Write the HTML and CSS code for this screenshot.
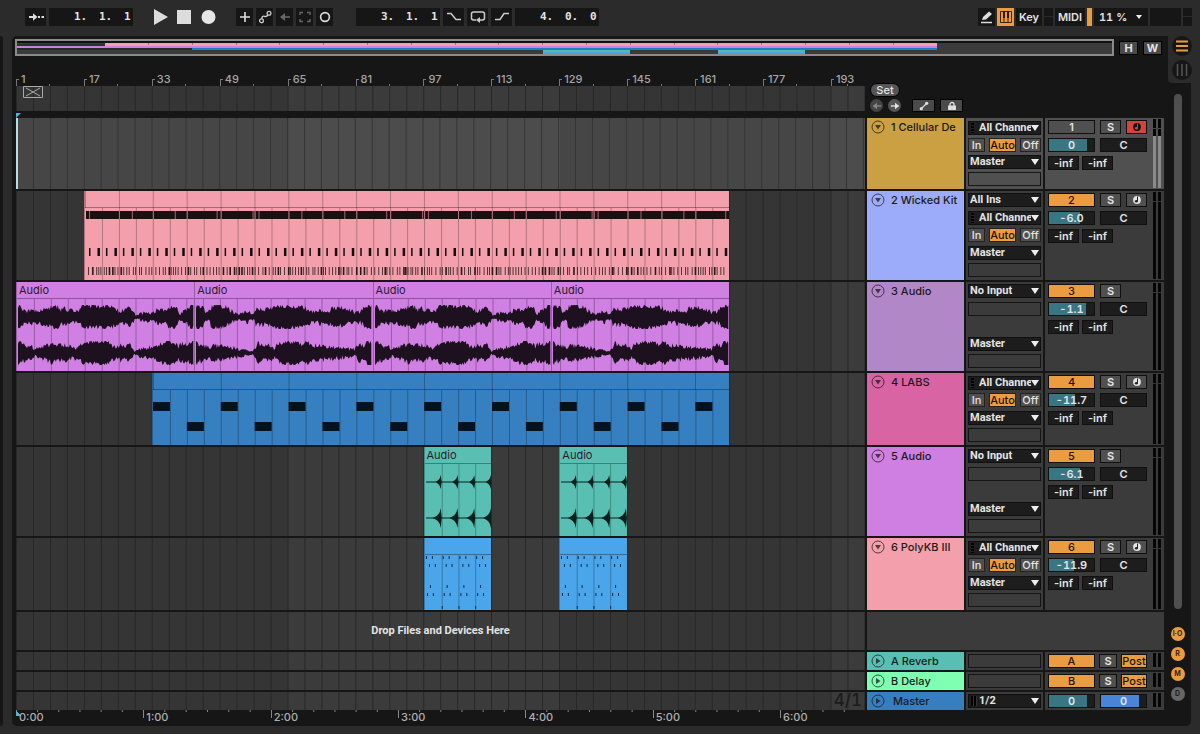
FILE: index.html
```html
<!DOCTYPE html>
<html lang="en">
<head>
<meta charset="utf-8">
<title>Arrangement</title>
<link rel="stylesheet" href="styles.css">
</head>
<body>
<svg class="sprite" aria-hidden="true">
  <symbol id="fold" viewBox="0 0 14 14"><circle cx="7" cy="7" r="6" fill="none" stroke="currentColor"/><path d="M4 5h6L7 9.500z" fill="currentColor"/></symbol>
  <symbol id="unfold" viewBox="0 0 14 14"><circle cx="7" cy="7" r="6" fill="none" stroke="currentColor"/><path d="M5 4v6l4.500-3z" fill="currentColor"/></symbol>
  <symbol id="arm" viewBox="0 0 10 10"><circle cx="5" cy="5" r="3.900" fill="currentColor"/><path d="M5.500 1.600v4.600" stroke="var(--note)" stroke-width="1" fill="none"/><ellipse cx="4.400" cy="6.300" rx="1.500" ry="1.200" fill="var(--note)"/></symbol>
  <symbol id="left" viewBox="0 0 12 12"><path d="M2 6h9" stroke="currentColor" stroke-width="1.600"/><path d="M1 6l5-4v8z" fill="currentColor"/></symbol>
  <symbol id="right" viewBox="0 0 12 12"><path d="M1 6h9" stroke="currentColor" stroke-width="1.600"/><path d="M11 6L6 2v8z" fill="currentColor"/></symbol>
</svg>

<header class="toolbar">
  <div class="group">
    <button class="tool wide" aria-label="Follow"><svg width="18" height="12" viewBox="0 0 18 12"><path d="M2 6h6M11 6h2M14.500 6h2.500" stroke="#ddd" stroke-width="1.800"/><path d="M10.500 6L6 2.200v7.600z" fill="#ddd"/></svg></button>
    <div class="position"><span>1.</span><span>1.</span><span>1</span></div>
  </div>
  <div class="transport">
    <button aria-label="Play"><svg width="15" height="16"><path d="M1 0l14 8-14 8z" fill="#dcdcdc"/></svg></button>
    <button aria-label="Stop"><svg width="15" height="16"><path d="M0 1h14v14H0z" fill="#dcdcdc"/></svg></button>
    <button aria-label="Record"><svg width="15" height="16"><circle cx="7.500" cy="8" r="7" fill="#e6e6e6"/></svg></button>
  </div>
  <div class="group edit">
    <button class="tool" aria-label="Overdub"><svg width="12" height="12"><path d="M6 1v10M1 6h10" stroke="#ddd" stroke-width="1.600"/></svg></button>
    <button class="tool" aria-label="Automation arm"><svg width="14" height="14" fill="none" stroke="#ccc" stroke-width="1.300"><circle cx="3.500" cy="10.800" r="1.900"/><circle cx="11" cy="3.200" r="1.900"/><path d="M3.800 8.900Q4 5.500 6.500 6.300T9.800 4.700"/></svg></button>
    <button class="tool dim" aria-label="Re-enable automation"><svg width="12" height="12"><use href="#left"/></svg></button>
    <button class="tool dim" aria-label="Capture"><svg width="12" height="12" fill="none" stroke="currentColor" stroke-width="1.400"><path d="M1 4V1.500h3M8 1.500h3V4M11 8v2.500H8M4 10.500H1V8"/></svg></button>
    <button class="tool" aria-label="Session record"><svg width="12" height="12"><circle cx="6" cy="6" r="4.400" fill="none" stroke="#ddd" stroke-width="1.600"/></svg></button>
  </div>
  <div class="group loop">
    <div class="position"><span>3.</span><span>1.</span><span>1</span></div>
    <button class="tool wide" aria-label="Punch in"><svg width="16" height="10" fill="none" stroke="#ccc" stroke-width="1.500"><path d="M1 1.500h4l5 6h5"/></svg></button>
    <button class="tool wide" aria-label="Loop"><svg width="16" height="14" fill="none" stroke="#ccc" stroke-width="1.500"><path d="M6 10H3.500Q1.500 10 1.500 8V4q0-2 2-2h9q2 0 2 2v4q0 2-2 2H10"/><path d="M6 10l4-3v6z" fill="#ccc" stroke="none"/></svg></button>
    <button class="tool wide" aria-label="Punch out"><svg width="16" height="10" fill="none" stroke="#ccc" stroke-width="1.500"><path d="M1 7.500h5l4-6h5"/></svg></button>
    <div class="position"><span>4.</span><span>0.</span><span>0</span></div>
  </div>
  <div class="group status">
    <button class="tool" aria-label="Draw mode"><svg width="13" height="13"><path d="M2 9l1-3 6-5.500L12 3 6 8.500z" fill="#ddd"/><path d="M1 11.500h11" stroke="#ddd" stroke-width="1.500"/></svg></button>
    <button class="tool keys" aria-label="Computer MIDI keyboard"><svg width="12" height="12"><path d="M.5.5h11v11H.5zM4 6v5.500M8 6v5.500" fill="none" stroke="#3b2508"/><path d="M3 0h2v7H3zM7 0h2v7H7z" fill="#2a1a05"/></svg></button>
    <button class="tool text">Key</button>
    <span class="lamps"></span>
    <button class="tool text midi-map">MIDI</button>
    <span class="load"></span>
    <label class="pick cpu"><select aria-label="CPU load"><option>11 %</option></select></label>
    <span class="blank"></span>
    <span class="lamps"></span>
  </div>
</header>

<div class="work">
  <div class="browser-edge"></div>
  <main class="panel">
    <div class="arrange">
      <div class="overview-row">
        <div class="overview">
          <svg viewBox="0 0 100 11" preserveAspectRatio="none" shape-rendering="crispEdges">
            <rect width="84" height="6" y="1" fill="#1c3a24"/>
            <rect x="8" y="0" width="76" height="3" fill="#f4a0ac"/>
            <rect x="0" y="3" width="84" height="2" fill="#cf7fe2"/>
            <rect x="0" y="5" width="84" height="1" fill="#282828"/>
            <rect x="16" y="5" width="68" height="2" fill="#1d80c4"/>
            <rect x="48" y="7" width="8" height="2" fill="#4fbcb0"/><rect x="48" y="9" width="8" height="2" fill="#4aa5ea"/>
            <rect x="64" y="7" width="8" height="2" fill="#4fbcb0"/><rect x="64" y="9" width="8" height="2" fill="#4aa5ea"/>
            <path d="M12 0v2M16 0v2M20 0v2M24 0v2M28 0v2M32 0v2M36 0v2M40 0v2M44 0v2M48 0v2M52 0v2M56 0v2M60 0v2M64 0v2M68 0v2M72 0v2M76 0v2M80 0v2" stroke="#a5707a" stroke-width="1" vector-effect="non-scaling-stroke"/>
          </svg>
        </div>
        <button class="key">H</button>
        <button class="key">W</button>
      </div>

      <div class="head">
        <div class="rulers">
          <ol class="bars"><li>1</li><li>17</li><li>33</li><li>49</li><li>65</li><li>81</li><li>97</li><li>113</li><li>129</li><li>145</li><li>161</li><li>177</li><li>193</li></ol>
          <div class="scrub lines"><svg width="20" height="12" viewBox="0 0 20 12"><path d="M.5.5h19v11H.5zM3 2l14 8M17 2L3 10" fill="none" stroke="#aaa"/></svg></div>
          <svg class="flag" width="5" height="5"><path d="M0 0h5L0 5z" fill="#4db5d8"/></svg>
        </div>
        <div class="locators">
          <button class="set">Set</button>
          <div class="nav">
            <button class="round dim" aria-label="Previous locator"><svg width="10" height="10"><use href="#left"/></svg></button>
            <button class="round" aria-label="Next locator"><svg width="10" height="10"><use href="#right"/></svg></button>
            <button class="small" aria-label="Automation mode"><svg width="10" height="10"><path d="M2 8l6-6" stroke="#ddd" stroke-width="1.300"/><circle cx="2.300" cy="7.700" r="1.600" fill="#ddd"/><circle cx="7.700" cy="2.300" r="1.600" fill="#ddd"/></svg></button>
            <button class="small" aria-label="Lock envelopes"><svg width="10" height="10"><path d="M1 4.500h8V9H1z" fill="#ddd"/><path d="M3 5V3.500a2 2 0 0 1 4 0V5" fill="none" stroke="#ddd" stroke-width="1.300"/></svg></button>
          </div>
        </div>
      </div>

      <section class="track first selected">
        <div class="lane lines"></div>
        <div class="name gold"><button aria-label="Fold"><svg><use href="#fold"/></svg></button>1 Cellular De</div>
        <div class="io midi">
          <label class="pick chan"><select aria-label="Channel"><option>All Channels</option></select></label>
          <div class="monitor"><button>In</button><button class="on">Auto</button><button>Off</button></div>
          <label class="pick"><select aria-label="Output"><option>Master</option></select></label>
          <span class="slot"></span>
        </div>
        <div class="mix">
          <div class="controls">
            <div class="line"><button class="num">1</button><button class="sq">S</button><button class="sq rec" aria-label="Arm"><svg><use href="#arm"/></svg></button></div>
            <div class="line"><input class="vol" aria-label="Volume" value="0" style="--fill:84%"><input class="pan" aria-label="Pan" value="C"></div>
            <div class="line sends"><input aria-label="Send A" value="-inf"><input aria-label="Send B" value="-inf"></div>
          </div>
          <div class="meter"></div>
        </div>
      </section>

      <section class="track tall">
        <div class="lane lines">
          <div class="clip kit"><div class="title"></div><svg data-art="kit" viewBox="0 0 646 72" preserveAspectRatio="none"></svg></div>
        </div>
        <div class="name periwinkle"><button aria-label="Fold"><svg><use href="#fold"/></svg></button>2 Wicked Kit</div>
        <div class="io">
          <label class="pick"><select aria-label="Input"><option>All Ins</option></select></label>
          <label class="pick chan"><select aria-label="Channel"><option>All Channels</option></select></label>
          <div class="monitor"><button>In</button><button class="on">Auto</button><button>Off</button></div>
          <label class="pick"><select aria-label="Output"><option>Master</option></select></label>
          <span class="slot"></span>
        </div>
        <div class="mix">
          <div class="controls">
            <div class="line"><button class="num on">2</button><button class="sq">S</button><button class="sq" aria-label="Arm"><svg><use href="#arm"/></svg></button></div>
            <div class="line"><input class="vol" aria-label="Volume" value="-6.0" style="--fill:70%"><input class="pan" aria-label="Pan" value="C"></div>
            <div class="line sends"><input aria-label="Send A" value="-inf"><input aria-label="Send B" value="-inf"></div>
          </div>
          <div class="meter"></div>
        </div>
      </section>

      <section class="track tall">
        <div class="lane lines">
          <div class="clip orchid o1"><div class="title">Audio</div><svg data-art="waveA" viewBox="0 0 178 72" preserveAspectRatio="none"></svg></div>
          <div class="clip orchid o2"><div class="title">Audio</div><svg data-art="waveB" viewBox="0 0 178 72" preserveAspectRatio="none"></svg></div>
          <div class="clip orchid o3"><div class="title">Audio</div><svg data-art="waveA" viewBox="0 0 178 72" preserveAspectRatio="none"></svg></div>
          <div class="clip orchid o4"><div class="title">Audio</div><svg data-art="waveB" viewBox="0 0 178 72" preserveAspectRatio="none"></svg></div>
        </div>
        <div class="name lilac"><button aria-label="Fold"><svg><use href="#fold"/></svg></button>3 Audio</div>
        <div class="io">
          <label class="pick"><select aria-label="Input"><option>No Input</option></select></label>
          <span class="slot"></span>
          <span class="spacer"></span>
          <label class="pick"><select aria-label="Output"><option>Master</option></select></label>
          <span class="slot"></span>
        </div>
        <div class="mix">
          <div class="controls">
            <div class="line"><button class="num on">3</button><button class="sq">S</button></div>
            <div class="line"><input class="vol" aria-label="Volume" value="-1.1" style="--fill:82%"><input class="pan" aria-label="Pan" value="C"></div>
            <div class="line sends"><input aria-label="Send A" value="-inf"><input aria-label="Send B" value="-inf"></div>
          </div>
          <div class="meter"></div>
        </div>
      </section>

      <section class="track">
        <div class="lane lines">
          <div class="clip labs"><div class="title"></div><svg data-art="labs" viewBox="0 0 578 55" preserveAspectRatio="none"></svg></div>
        </div>
        <div class="name pink"><button aria-label="Fold"><svg><use href="#fold"/></svg></button>4 LABS</div>
        <div class="io midi">
          <label class="pick chan"><select aria-label="Channel"><option>All Channels</option></select></label>
          <div class="monitor"><button>In</button><button class="on">Auto</button><button>Off</button></div>
          <label class="pick"><select aria-label="Output"><option>Master</option></select></label>
          <span class="slot"></span>
        </div>
        <div class="mix">
          <div class="controls">
            <div class="line"><button class="num on">4</button><button class="sq">S</button><button class="sq" aria-label="Arm"><svg><use href="#arm"/></svg></button></div>
            <div class="line"><input class="vol" aria-label="Volume" value="-11.7" style="--fill:57%"><input class="pan" aria-label="Pan" value="C"></div>
            <div class="line sends"><input aria-label="Send A" value="-inf"><input aria-label="Send B" value="-inf"></div>
          </div>
          <div class="meter"></div>
        </div>
      </section>

      <section class="track tall">
        <div class="lane lines">
          <div class="clip teal p1"><div class="title">Audio</div><svg data-art="hits" viewBox="0 0 68 72" preserveAspectRatio="none"></svg></div>
          <div class="clip teal p2"><div class="title">Audio</div><svg data-art="hits" viewBox="0 0 68 72" preserveAspectRatio="none"></svg></div>
        </div>
        <div class="name violet"><button aria-label="Fold"><svg><use href="#fold"/></svg></button>5 Audio</div>
        <div class="io">
          <label class="pick"><select aria-label="Input"><option>No Input</option></select></label>
          <span class="slot"></span>
          <span class="spacer"></span>
          <label class="pick"><select aria-label="Output"><option>Master</option></select></label>
          <span class="slot"></span>
        </div>
        <div class="mix">
          <div class="controls">
            <div class="line"><button class="num on">5</button><button class="sq">S</button></div>
            <div class="line"><input class="vol" aria-label="Volume" value="-6.1" style="--fill:70%"><input class="pan" aria-label="Pan" value="C"></div>
            <div class="line sends"><input aria-label="Send A" value="-inf"><input aria-label="Send B" value="-inf"></div>
          </div>
          <div class="meter"></div>
        </div>
      </section>

      <section class="track">
        <div class="lane lines">
          <div class="clip sky p1"><div class="title"></div><svg data-art="arp" viewBox="0 0 68 55" preserveAspectRatio="none"></svg></div>
          <div class="clip sky p2"><div class="title"></div><svg data-art="arp" viewBox="0 0 68 55" preserveAspectRatio="none"></svg></div>
        </div>
        <div class="name rose"><button aria-label="Fold"><svg><use href="#fold"/></svg></button>6 PolyKB III</div>
        <div class="io midi">
          <label class="pick chan"><select aria-label="Channel"><option>All Channels</option></select></label>
          <div class="monitor"><button>In</button><button class="on">Auto</button><button>Off</button></div>
          <label class="pick"><select aria-label="Output"><option>Master</option></select></label>
          <span class="slot"></span>
        </div>
        <div class="mix">
          <div class="controls">
            <div class="line"><button class="num on">6</button><button class="sq">S</button><button class="sq" aria-label="Arm"><svg><use href="#arm"/></svg></button></div>
            <div class="line"><input class="vol" aria-label="Volume" value="-11.9" style="--fill:55%"><input class="pan" aria-label="Pan" value="C"></div>
            <div class="line sends"><input aria-label="Send A" value="-inf"><input aria-label="Send B" value="-inf"></div>
          </div>
          <div class="meter"></div>
        </div>
      </section>

      <section class="track drop">
        <div class="lane lines"><p>Drop Files and Devices Here</p></div>
        <div class="filler"></div>
      </section>

      <section class="track short">
        <div class="lane lines"></div>
        <div class="name teal"><button aria-label="Unfold"><svg><use href="#unfold"/></svg></button>A Reverb</div>
        <div class="io"><span class="slot"></span></div>
        <div class="mix">
          <div class="controls"><div class="line return"><button class="num on">A</button><button class="sq">S</button><button class="post">Post</button></div></div>
          <div class="meter"></div>
        </div>
      </section>
      <section class="track short">
        <div class="lane lines"></div>
        <div class="name mint"><button aria-label="Unfold"><svg><use href="#unfold"/></svg></button>B Delay</div>
        <div class="io"><span class="slot"></span></div>
        <div class="mix">
          <div class="controls"><div class="line return"><button class="num on">B</button><button class="sq">S</button><button class="post">Post</button></div></div>
          <div class="meter"></div>
        </div>
      </section>
      <section class="track short master">
        <div class="lane lines"><span class="signature">4/1</span></div>
        <div class="name blue"><button aria-label="Unfold"><svg><use href="#unfold"/></svg></button><span class="indent">Master</span></div>
        <div class="io"><label class="pick chan stereo"><select aria-label="Master output"><option>1/2</option></select></label></div>
        <div class="mix">
          <div class="controls"><div class="line"><input class="vol" aria-label="Master volume" value="0" style="--fill:84%"><input class="vol cue" aria-label="Cue volume" value="0" style="--fill:84%"></div></div>
          <div class="meter"></div>
        </div>
      </section>

      <div class="foot">
        <ol class="seconds"><li>0:00</li><li>1:00</li><li>2:00</li><li>3:00</li><li>4:00</li><li>5:00</li><li>6:00</li></ol>
      </div>
    </div>

    <aside class="side">
      <div class="views">
        <button aria-label="Arrangement view"><svg width="14" height="14"><path d="M1 2.500h12M1 7h12M1 11.500h12" stroke="#eb9c40" stroke-width="2"/></svg></button>
        <button aria-label="Session view"><svg width="14" height="14"><path d="M2.500 1v12M7 1v12M11.500 1v12" stroke="#555" stroke-width="1.500"/></svg></button>
      </div>
      <div class="scrollbar"></div>
      <div class="toggles">
        <button aria-label="In/Out">I·O</button>
        <button aria-label="Returns">R</button>
        <button aria-label="Mixer">M</button>
        <button class="off" aria-label="Delays">D</button>
      </div>
    </aside>
  </main>
</div>
<script src="clips.js"></script>
</body>
</html>
```

FILE: styles.css
```css
* { box-sizing: border-box; }

:root {
  --bg: #2b2b2b;
  --dark: #161616;
  --cell: #3b3b3b;
  --line: #101010;
  --orange: #eb9c40;
  --text: #e4e4e4;
  --note: #222;
  --label: 700 11px/14px Roboto, "Liberation Sans", sans-serif;
}

body {
  margin: 0;
  min-height: 100vh;
  display: flex;
  flex-direction: column;
  background: var(--bg);
  color: var(--text);
  font: 500 11px/14px Inter, "Liberation Sans", sans-serif;
}

button, input, select { font: inherit; color: inherit; padding: 0; margin: 0; border: 0; border-radius: 0; background: none; min-width: 0; }
button { display: flex; align-items: center; justify-content: center; }
ol, p { margin: 0; padding: 0; list-style: none; }
svg { display: block; }
.sprite { display: none; }

/* Toolbar */
.toolbar { display: flex; align-items: center; height: 36px; padding: 0 8px 2px 25px; }
.group { display: flex; gap: 3px; }
.tool { width: 17px; height: 18px; background: var(--dark); }
.tool.wide { width: 21px; }
.tool.dim { color: #666; }
.tool.text { width: 26px; font-weight: 600; }
.tool.midi-map { width: 30px; }
.tool.keys { background: var(--orange); }
.position { display: flex; justify-content: flex-end; width: 84px; height: 18px; padding-right: 1px; background: var(--dark); font: bold 11px/18px "DejaVu Sans Mono", monospace; }
.position span { width: 25px; }
.position span:last-child { width: 8px; }
.transport { display: flex; gap: 9px; margin: 0 20px; }
.loop { margin-left: 23px; }
.status { margin-left: auto; gap: 2px; }
.lamps { width: 9px; height: 18px; background: linear-gradient(var(--dark) 8px, var(--bg) 8px 9px, var(--dark) 9px); }
.load { width: 5px; height: 18px; background: var(--orange); }
.blank { width: 31px; height: 18px; background: var(--dark); }

/* Drop-downs */
.pick { position: relative; display: block; height: 14px; border: 1px solid var(--line); background: #1d1d1d; font: var(--label); }
.pick select { appearance: none; display: block; width: 100%; height: 12px; padding: 0 9px 0 1px; line-height: 12px; }
.pick::after { content: ""; position: absolute; right: 1px; top: 3px; border: 4px solid transparent; border-top: 6px solid #eee; border-bottom: 0; pointer-events: none; }
.chan select { padding-left: 10px; }
.chan::before { content: ""; position: absolute; left: 2px; top: 1px; width: 3px; height: 10px; background: repeating-linear-gradient(#000 0 2px, #222 2px 3px); }
.stereo::before { width: 6px; background: repeating-linear-gradient(90deg, #000 0 2px, #333 2px 3px); }
.cpu { width: 54px; height: 18px; border: 0; background: var(--dark); font: inherit; font-weight: 600; font-variant-numeric: tabular-nums; }
.cpu select { height: 18px; padding-left: 5px; }
.cpu::after { right: 6px; top: 7px; border-width: 3px; border-top-width: 4px; }

/* Main panel */
.work { flex: 1; display: flex; gap: 9px; padding: 0 9px 8px 0; }
.browser-edge { width: 3px; background: var(--dark); border-radius: 0 4px 4px 0; }
.panel { flex: 1; min-width: 0; display: grid; grid-template-columns: minmax(0, 1fr) 27px; background: var(--dark); border-radius: 5px; }
.arrange { min-width: 0; padding-left: 4px; }

.overview-row { display: flex; align-items: center; gap: 5px; height: 20px; padding: 3px 2px 0 0; }
.overview { flex: 1; height: 17px; padding-top: 2px; border: 2px solid #8b8b8b; margin-left: -1px; background: #111; }
.overview svg { width: 100%; height: 11px; background: var(--cell); }
.key { width: 19px; height: 14px; border: 1px solid #000; background: #4a4a4a; font-weight: 700; }

.head, .foot { display: grid; grid-template-columns: minmax(0, 1fr) 297px; gap: 2px; }
.head { height: 61px; }
.bars { display: grid; grid-template-columns: repeat(12, 8%) 4%; height: 30px; color: #a5a5a5; }
.bars li {
  padding: 16px 0 0 5px;
  white-space: nowrap;
  background:
    linear-gradient(#777, #777) 0 100% / 1px 7px no-repeat,
    linear-gradient(#777, #777) 0 23px / 3px 1px no-repeat,
    linear-gradient(#777, #777) 50% 100% / 1px 2px no-repeat;
}
.lines {
  background:
    linear-gradient(90deg, #272727 1px, transparent 1px) 0 0 / 2% 100%,
    repeating-linear-gradient(90deg, #353535 0 32%, #3b3b3b 32% 64%);
}
.scrub { height: 25px; padding-left: 7px; }
.flag { margin-top: 2px; }
.locators { padding: 27px 0 0 3px; }
.set { width: 30px; height: 14px; border: 1px solid #000; border-radius: 7px; background: #555; }
.nav { display: flex; align-items: center; gap: 5px; margin-top: 2px; }
.round { width: 13px; height: 13px; border-radius: 50%; background: #555; }
.round.dim { background: #444; color: #888; }
.nav .small { width: 23px; height: 13px; border: 1px solid #000; background: #4a4a4a; }
.nav .small:nth-child(3) { margin-left: 6px; }

/* Tracks */
.track { display: grid; grid-template-columns: minmax(0, 1fr) 97px 77px 119px; column-gap: 2px; height: 74px; padding: 1px 0; }
.track.first { height: 73px; }
.track.tall { height: 91px; }
.track.drop { height: 40px; }
.track.short { height: 20px; }
.track.master { height: 19px; padding-bottom: 0; }
.track > * { min-width: 0; min-height: 0; }
.lane { display: grid; grid-template-columns: repeat(100, minmax(0, 1fr)); }
.selected .lane {
  border-left: 2px solid #b6dce6;
  background:
    linear-gradient(90deg, #343434 1px, transparent 1px) -2px 0 / 2% 100%,
    repeating-linear-gradient(90deg, #464646 0 32%, #4c4c4c 32% 64%);
}
.drop p { grid-column: 1 / -1; align-self: center; text-align: center; font: var(--label); }
.filler { grid-column: 2 / -1; background: var(--cell); }
.signature { grid-column: 1 / -1; justify-self: end; padding-right: 3px; color: #1c1c1c; font-size: 17px; font-variant-numeric: tabular-nums; line-height: 16px; }

.name { display: flex; align-items: flex-start; gap: 6px; padding: 2px 0 0 4px; color: #1c1a1a; white-space: nowrap; overflow: hidden; }
.name svg { width: 14px; height: 14px; opacity: .75; }
.indent { padding-left: 2px; }
.gold { background: #caa043; }
.periwinkle { background: #9dabfb; }
.lilac { background: #b287c8; }
.pink { background: #d864a3; }
.violet { background: #cf7fe2; }
.rose { background: #f3a0ac; }
.teal { background: #5abfb3; }
.mint { background: #7effb2; }
.blue { background: #357fc0; }

.io { display: flex; flex-direction: column; justify-content: space-between; padding: 2px 2px 3px; background: var(--cell); }
.io.midi { padding-top: 3px; }
.slot { height: 14px; border: 1px solid #151515; }
.spacer { height: 14px; }
.monitor { display: flex; justify-content: space-between; height: 14px; }
.monitor button { height: 14px; width: 17px; background: #505050; border: 1px solid #222; }
.monitor button + button { width: 27px; }
.monitor button:last-child { width: 21px; }
.monitor .on { background: var(--orange); color: #1d1408; }

.mix { display: flex; justify-content: space-between; padding: 2px 3px 0; background: var(--cell); }
.controls { display: flex; flex-direction: column; gap: 4px; width: 99px; }
.line { display: flex; gap: 5px; height: 14px; }
.line > * { height: 14px; border: 1px solid var(--line); text-align: center; line-height: 12px; font-weight: 600; }
.num { width: 47px; background: #505050; }
.sq { width: 21px; background: #505050; }
.sq svg { width: 10px; height: 10px; }
.rec { --note: #d5443a; background: #d5443a; color: #111; }
.num.on, .post { background: var(--orange); color: #1d1408; font-weight: 500; }
.vol, .pan { width: 47px; background: #1d1d1d; font-variant-numeric: tabular-nums; }
.vol { background: linear-gradient(90deg, #387684 var(--fill), #1d1d1d var(--fill)); }
.cue { background: linear-gradient(90deg, #4884d8 var(--fill), #1d1d1d var(--fill)); }
.sends { gap: 3px; }
.sends input { width: 31px; background: #1d1d1d; }
.return { gap: 4px; }
.return .sq { width: 18px; }
.return .post { width: 26px; }
.meter { width: 8px; margin: -1px 0 1px; background: linear-gradient(90deg, #050505 3px, transparent 3px 5px, #050505 5px); }
.track:not(.short) .meter {
  background:
    linear-gradient(#333, #333) 0 9px / 8px 1px no-repeat,
    linear-gradient(90deg, #050505 3px, transparent 3px 5px, #050505 5px);
}
.selected .io, .selected .mix { background: #505050; }
.track.selected .meter {
  background:
    linear-gradient(90deg, #8a8a8a 3px, transparent 3px 5px, #8a8a8a 5px) 0 17px no-repeat,
    linear-gradient(#444, #444) 0 9px / 8px 1px no-repeat,
    linear-gradient(90deg, #050505 3px, #505050 3px 5px, #050505 5px);
}
.short .io, .short .mix, .short .name { padding-top: 2px; padding-bottom: 2px; }

/* Clips */
.clip { display: flex; flex-direction: column; min-width: 0; min-height: 0; grid-row: 1; color: #2a1a2e; border-left: 1px solid #0004; }
.clip .title { height: 17px; padding-left: 2px; line-height: 17px; border-bottom: 1px solid #0005; font-weight: 400; overflow: hidden; }
.clip svg { flex: 1; width: 100%; min-height: 0; }
.kit { grid-column: 9 / 85; background: #f4a0ac; }
.kit .title { background: linear-gradient(90deg, #0004 1px, transparent 1px) 0 0 / calc(100% / 19) 100%; }
.orchid { background: #cf80e2; }
.o1 { grid-column: 1 / 22; }
.o2 { grid-column: 22 / 43; }
.o3 { grid-column: 43 / 64; }
.o4 { grid-column: 64 / 85; }
.labs { grid-column: 17 / 85; background: #367fc0; }
.labs .title { background: linear-gradient(90deg, #0004 1px, transparent 1px) 0 0 / calc(100% * 4 / 34) 100%; }
.sky { background: #4aa5ea; }
.p1 { grid-column: 49 / 57; }
.p2 { grid-column: 65 / 73; }

/* Time ruler */
.seconds { display: grid; grid-template-columns: repeat(6, 15%) 10%; height: 16px; color: #b0b0b0; }
.seconds li {
  padding: 0 0 0 3px;
  white-space: nowrap;
  background:
    linear-gradient(#888, #888) 0 0 / 1px 8px no-repeat,
    linear-gradient(90deg, #888 1px, transparent 1px) 0 0 / calc(100% / 6) 2px repeat-x;
}
.seconds li:last-child { background-size: 1px 8px, 25% 2px; }
.seconds li:first-child { background: conic-gradient(from 135deg at 0 0, #4db5d8 45deg, transparent 0) 0 0 / 5px 6px no-repeat, linear-gradient(90deg, #888 1px, transparent 1px) 0 0 / calc(100% / 6) 2px repeat-x; }

/* Right side */
.side { display: flex; flex-direction: column; align-items: center; }
.views { align-self: flex-end; display: flex; flex-direction: column; align-items: center; gap: 4px; width: 23px; height: 47px; padding-left: 5px; background: var(--bg); border-bottom-left-radius: 4px; }
.views button { width: 20px; height: 20px; flex: none; border-radius: 50%; background: var(--dark); }
.scrollbar { flex: 1; width: 8px; margin: 11px 0 18px; border-radius: 4px; background: #4f4f4f; }
.toggles { display: flex; flex-direction: column; gap: 6px; padding-bottom: 25px; }
.toggles button { width: 14px; height: 14px; border-radius: 50%; background: var(--orange); color: #3b2508; font-size: 7px; font-weight: 700; }
.toggles .off { background: #666; color: #222; }
```

FILE: clips.js
```js
// Draws the note and waveform content inside each clip.
const NS = 'http://www.w3.org/2000/svg';

function path(svg, d, fill) {
  const p = document.createElementNS(NS, 'path');
  p.setAttribute('d', d);
  p.setAttribute('fill', fill);
  svg.appendChild(p);
}

function random(seed) {
  let s = seed;
  return () => (s = (s * 16807) % 2147483647) / 2147483647;
}

const box = (x, y, w, h) => `M${x} ${y}h${w}v${h}h${-w}z`;

function grid(svg, width, height, offset = 0) {
  let d = '';
  for (let x = 17 - offset; x < width; x += 17) d += box(x, 0, 1, height);
  path(svg, d, 'rgba(0,0,0,.27)');
}

// [x, half height] pairs for left and right channels
const waves = {
  waveA: [
    [[0,12],[4,11],[7,6],[10,6],[14,8],[19,6],[25,7],[30,9],[38,11],[41,11],[44,7],[48,9],[52,7],[57,6],[63,7],[66,12],[80,11],[87,12],[95,11],[98,9],[103,6],[108,7],[114,10],[117,5],[119,2],[125,4],[130,5],[135,4],[138,6],[145,8],[150,7],[153,11],[160,11],[163,3],[168,6],[174,11],[178,12]],
    [[0,12],[3,12],[6,8],[14,8],[18,4],[22,5],[28,7],[35,10],[45,8],[50,8],[57,6],[62,6],[66,11],[72,10],[80,12],[90,12],[95,8],[100,5],[104,8],[108,6],[112,9],[115,7],[118,2],[123,4],[130,5],[140,8],[150,12],[156,10],[162,7],[165,10],[172,8],[175,12],[178,12]]
  ],
  waveB: [
    [[0,12],[7,11],[12,5],[15,6],[17,12],[30,11],[35,7],[44,3],[52,6],[59,3],[61,9],[70,8],[77,10],[85,12],[108,11],[115,7],[122,5],[125,8],[133,6],[140,10],[150,9],[160,5],[168,7],[172,12],[178,12]],
    [[0,12],[4,9],[10,8],[15,6],[20,8],[28,7],[38,6],[45,4],[52,3],[58,2],[61,6],[63,11],[70,7],[75,8],[80,6],[84,10],[90,12],[100,12],[108,8],[112,11],[118,8],[130,7],[140,6],[150,5],[160,4],[165,8],[170,8],[173,12],[178,12]]
  ]
};

function level(points, x) {
  const i = Math.max(1, points.findIndex(p => p[0] >= x));
  const [x0, y0] = points[i - 1], [x1, y1] = points[i];
  return y0 + (y1 - y0) * (x - x0) / (x1 - x0);
}

function wave(svg, name) {
  const rnd = random(name === 'waveA' ? 71 : 913);
  grid(svg, 178, 72, name === 'waveA' ? 0 : 9);
  waves[name].forEach((points, channel) => {
    const mid = channel ? 54 : 18;
    const top = [], bottom = [];
    for (let x = 1; x <= 177; x++) {
      const h = level(points, x) - .5;
      const spread = Math.min(h, 5);
      top.push(`${x} ${mid - Math.min(12, h + (rnd() - .5) * spread)}`);
      bottom.unshift(`${x} ${mid + Math.min(12, h + (rnd() - .5) * spread)}`);
    }
    path(svg, `M${top.join('L')}L${bottom.join('L')}z`, '#1d111f');
  });
}

const art = {
  waveA: svg => wave(svg, 'waveA'),
  waveB: svg => wave(svg, 'waveB'),

  kit(svg) {
    grid(svg, 646, 72);
    const rnd = random(37);
    let bars = '', breaks = '', snare = '', hats = '';
    for (let x = 0; x < 646; x += 34) {
      bars += box(x + 1, 3, 33, 8);
      breaks += box(x + [4, 13, 22, 30, 32][(x / 34) % 5], 3, 1, 8);
    }
    for (let x = 4, i = 0; x < 644; x += 8.5, i++) snare += box(x, 40, i % 2 ? 2.5 : 1.5, 8);
    for (let x = 3; x < 643; x += 1.8 + rnd() * 2.6) hats += box(x, 59, rnd() > .75 ? 1.6 : .8, 8);
    path(svg, bars, '#1c0f11');
    path(svg, breaks, '#a0666e');
    path(svg, snare, '#160c0e');
    path(svg, hats, '#2a191c');
  },

  labs(svg) {
    grid(svg, 578, 55);
    let d = '';
    for (let x = 0; x < 578; x += 68) {
      d += box(x, 12, 17, 9);
      if (x < 540) d += box(x + 34, 32, 17, 9);
    }
    path(svg, d, '#04121e');
  },

  hits(svg) {
    grid(svg, 68, 72);
    let d = box(1, 17.5, 67, 1) + box(1, 53.5, 67, 1);
    for (const x of [16, 33, 50, 67]) {
      d += `M${x - 7} 18Q${x - 1} 17 ${x} 11L${x + 1} 18L${x} 25Q${x - 1} 19 ${x - 7} 18z`;
      d += `M${x - 10} 54Q${x - 1} 53 ${x} 44L${x + 1} 54L${x} 64Q${x - 1} 55 ${x - 10} 54z`;
    }
    path(svg, d, '#06201c');
  },

  arp(svg) {
    grid(svg, 68, 55);
    let d = '';
    for (const x of [0, 17, 34, 51]) {
      d += box(x + 1, 1, 1, 3) + box(x + 7, 1, 1, 3);
      d += box(x + 4, 9, 1, 3) + box(x + 10, 9, 1, 3);
      d += box(x + 5, 30, 1, 3) + box(x + 2, 38, 1, 3) + box(x + 8, 38, 1, 3);
      if (x) d += box(x, 51, 1, 3);
    }
    path(svg, d, '#0c2a44');
  }
};

document.querySelectorAll('[data-art]').forEach(svg => art[svg.dataset.art](svg));
```
